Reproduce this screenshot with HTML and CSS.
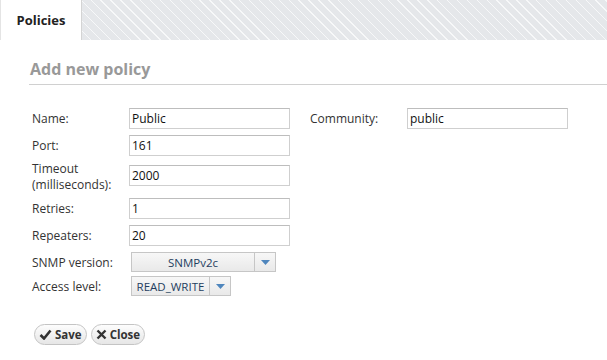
FILE: index.html
```html
<!DOCTYPE html>
<html>
<head>
<meta charset="utf-8">
<link rel="stylesheet" href="styles.css">
</head>
<body>
<div class="tabbar">
  <div class="tab">Policies</div>
  <div class="hatch"></div>
</div>
<div class="content">
  <h2 class="title">Add new policy</h2>
  <div class="form">
    <div class="label">Name:</div>
    <div class="field"><input class="input" value="Public"></div>
    <div class="label">Community:</div>
    <div class="field"><input class="input" value="public"></div>

    <div class="label">Port:</div>
    <div class="field"><input class="input" value="161"></div>
    <div></div><div></div>

    <div class="label tall">Timeout<br>(milliseconds):</div>
    <div class="field up"><input class="input" value="2000"></div>
    <div></div><div></div>

    <div class="label">Retries:</div>
    <div class="field"><input class="input" value="1"></div>
    <div></div><div></div>

    <div class="label">Repeaters:</div>
    <div class="field"><input class="input" value="20"></div>
    <div></div><div></div>
  </div>
  <div class="form selects">
    <div class="label">SNMP version:</div>
    <div class="field"><div class="select wide"><span class="sel-text">SNMPv2c</span><span class="sel-arrow"><svg width="9" height="5" viewBox="0 0 9 5"><path d="M0 0H9L4.5 5Z" fill="#4f86bd"/></svg></span></div></div>
    <div></div><div></div>

    <div class="label">Access level:</div>
    <div class="field"><div class="select narrow"><span class="sel-text">READ_WRITE</span><span class="sel-arrow"><svg width="9" height="5" viewBox="0 0 9 5"><path d="M0 0H9L4.5 5Z" fill="#4f86bd"/></svg></span></div></div>
    <div></div><div></div>
  </div>
  <div class="buttons">
    <button class="btn"><svg width="13" height="11" viewBox="0 0 13 11"><path d="M1.5 6L5 9.5L11.5 1.5" fill="none" stroke="#333" stroke-width="2.6"/></svg>Save</button>
    <button class="btn"><svg width="11" height="11" viewBox="0 0 11 11"><path d="M1.5 1.5L9.5 9.5M9.5 1.5L1.5 9.5" fill="none" stroke="#333" stroke-width="2.4"/></svg>Close</button>
  </div>
</div>
</body>
</html>
```
FILE: styles.css
```css
html, body {
  margin: 0;
  padding: 0;
  background: #fff;
  font-family: "Open Sans", "Noto Sans", sans-serif;
  font-size: 12px;
  color: #333;
}
.tabbar {
  display: flex;
  height: 40px;
}
.tab {
  border-right: 1px solid #d4d4d4;
  border-left: 1px solid #e4e4e4;
  box-sizing: border-box;
  width: 82px;
  display: flex;
  align-items: center;
  justify-content: center;
  font-weight: bold;
  font-size: 13px;
  color: #222;
  background: #fff;
}
.hatch {
  flex: 1;
  background-color: #e5e7ea;
  background-image: repeating-linear-gradient(45deg, #e5e7ea 0px, #e5e7ea 6px, #f7f8f9 6px, #f7f8f9 7px);
}
.content {
  padding: 18px 0 0 29px;
}
.title {
  margin: 0;
  font-size: 16px;
  font-weight: bold;
  color: #999;
  padding: 2px 0 5px 1px;
  border-bottom: 1px solid #d0d0d0;
  line-height: 19px;
}
.form {
  display: grid;
  grid-template-columns: 97px 181px 97px 161px;
  row-gap: 6px;
  margin-top: 23px;
  padding-left: 3px;
  align-items: center;
}
.form.selects {
  margin-top: 6px;
  row-gap: 4px;
}
.label {
  line-height: 15px;
  color: #333;
}
.label.tall {
  line-height: 16px;
  margin: -1px 0;
}
.field.up {
  margin-top: -3px;
}
.input {
  box-sizing: border-box;
  width: 161px;
  height: 21px;
  border: 1px solid #cfcfcf;
  border-top-color: #bdbdbd;
  padding: 0 0 0 2px;
  font-family: "Open Sans", "Noto Sans", sans-serif;
  font-size: 12px;
  color: #111;
  margin: 0;
  display: block;
}
.select {
  margin-left: 2px;
  display: flex;
  height: 20px;
  box-sizing: border-box;
  border: 1px solid #c6c6c6;
  background: linear-gradient(#f7f7f7, #e9e9e9);
  color: #1f3e5f;
  font-size: 11.5px;
}
.select.wide { width: 145px; }
.select.narrow { width: 100px; }
.sel-text {
  flex: 1;
  display: flex;
  align-items: center;
  justify-content: center;
  border-right: 1px solid #c6c6c6;
}
.sel-arrow {
  width: 20px;
  display: flex;
  align-items: center;
  justify-content: center;
}
.buttons {
  display: flex;
  gap: 4px;
  margin-top: 28px;
  padding-left: 5px;
}
.btn {
  display: flex;
  align-items: center;
  gap: 3px;
  height: 21px;
  padding: 0 4px 0 4px;
  border: 1px solid #c4c4c4;
  border-radius: 11px;
  background: linear-gradient(#fdfdfd, #e6e6e6);
  font-family: "Open Sans", "Noto Sans", sans-serif;
  font-weight: bold;
  font-size: 11.5px;
  color: #333;
  margin: 0;
}
```
